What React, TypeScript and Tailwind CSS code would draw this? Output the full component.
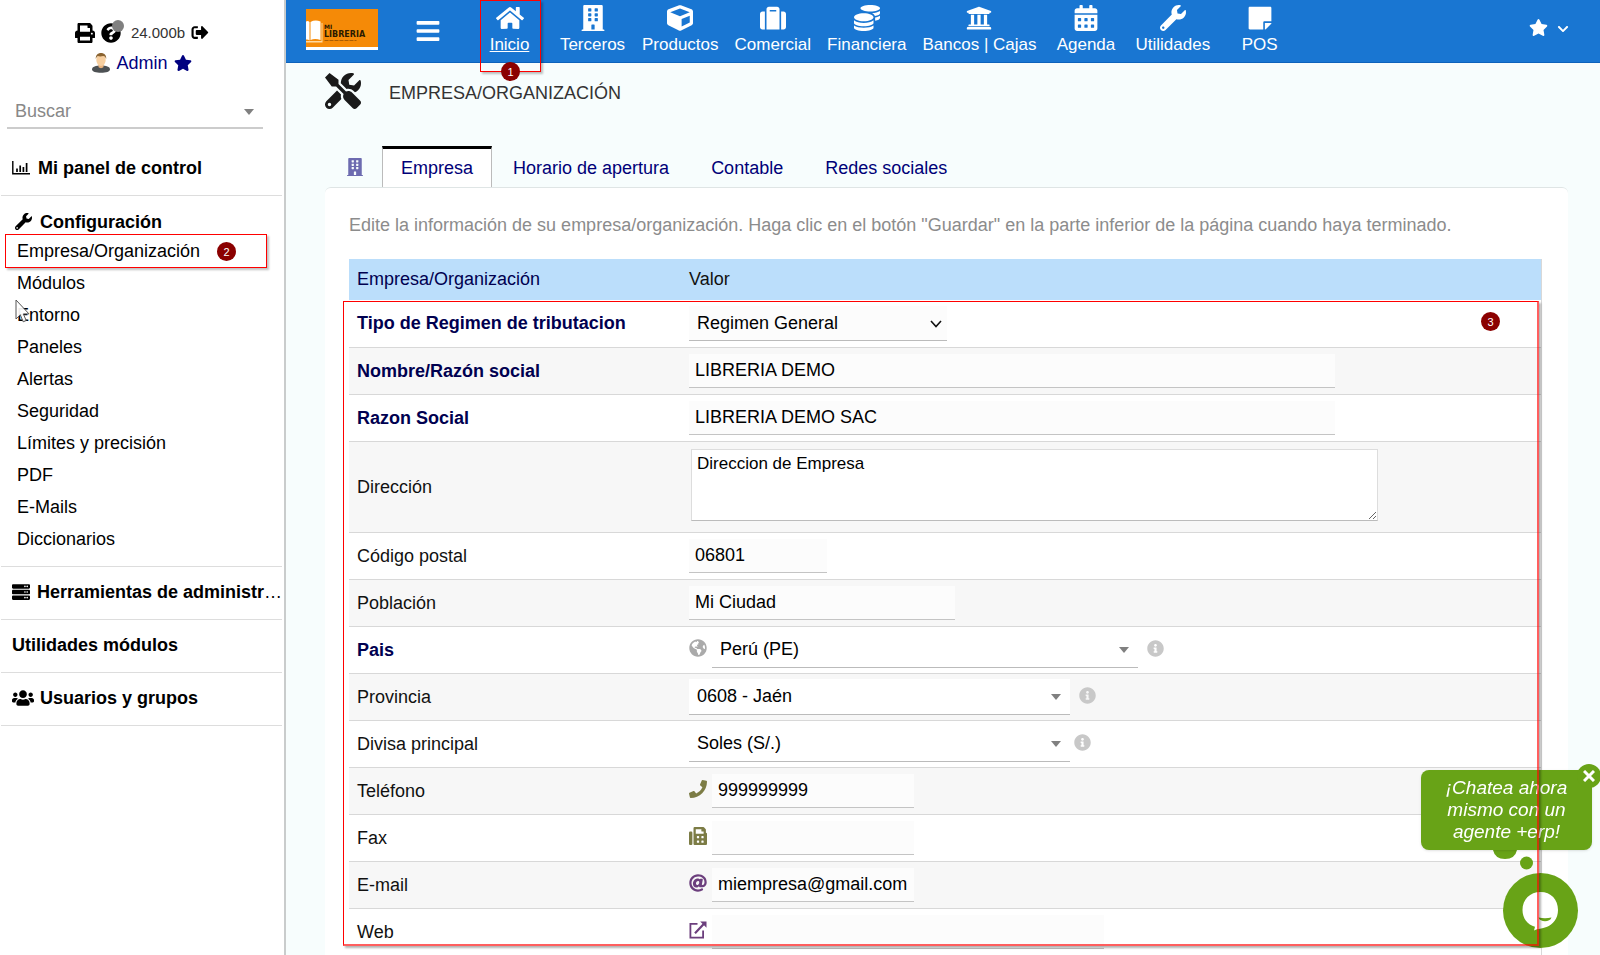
import { ReactNode, useState } from 'react'
import {
  FaAt,
  FaBars,
  FaBuilding,
  FaCalendarAlt,
  FaChevronDown,
  FaCoins,
  FaCube,
  FaFax,
  FaGlobeAmericas,
  FaHome,
  FaInfoCircle,
  FaPhone,
  FaPrint,
  FaQuestionCircle,
  FaServer,
  FaSignOutAlt,
  FaStar,
  FaStickyNote,
  FaSuitcase,
  FaTools,
  FaUniversity,
  FaUsers,
  FaWrench,
} from 'react-icons/fa'

const navItems = [
  { label: 'Inicio', icon: FaHome, active: true },
  { label: 'Terceros', icon: FaBuilding },
  { label: 'Productos', icon: FaCube },
  { label: 'Comercial', icon: FaSuitcase },
  { label: 'Financiera', icon: FaCoins },
  { label: 'Bancos | Cajas', icon: FaUniversity },
  { label: 'Agenda', icon: FaCalendarAlt },
  { label: 'Utilidades', icon: FaWrench },
  { label: 'POS', icon: FaStickyNote },
]

const configItems = [
  'Empresa/Organización',
  'Módulos',
  'Entorno',
  'Paneles',
  'Alertas',
  'Seguridad',
  'Límites y precisión',
  'PDF',
  'E-Mails',
  'Diccionarios',
]

const tabs = ['Empresa', 'Horario de apertura', 'Contable', 'Redes sociales']

const Badge = ({ n, className }: { n: number; className: string }) => (
  <span
    className={`absolute z-40 flex h-[19px] w-[19px] items-center justify-center rounded-full bg-[#8b0000] text-[11px] text-white ${className}`}
  >
    {n}
  </span>
)

const ChartIcon = () => (
  <svg viewBox="0 0 18 14" className="h-3.5 w-[18px]" fill="none" stroke="currentColor">
    <path d="M.8 0v12.8H18" strokeWidth="1.4" />
    <path d="M5 7.500v3.500M8.200 4.500v6.500M11.400 6v5M14.600 2v9" strokeWidth="1.700" />
  </svg>
)

const ExternalIcon = () => (
  <svg viewBox="0 0 18 18" className="h-[18px] w-[18px]" fill="none" stroke="currentColor" strokeWidth="1.8">
    <path d="M8.500 2.900H1.400v13.700h12.700V9.500" />
    <path d="M6 12.200L15 2.800" strokeWidth="2.200" />
    <path d="M11.200.5h6.300v6.300z" fill="currentColor" stroke="none" />
  </svg>
)

const Avatar = () => (
  <svg viewBox="0 0 18 20" className="h-5 w-[18px]">
    <path d="M0 16.500C0 13.500 4 12.500 9 12.500s9 1 9 4c0 2-4 3.300-9 3.300s-9-1.300-9-3.300z" fill="#4d5154" />
    <path d="M6.500 10h5v4c-1 1.500-4 1.500-5 0z" fill="#e9b27c" />
    <ellipse cx="9" cy="7" rx="4.700" ry="6" fill="#f7cfa0" />
    <path d="M3.800 6C3.500 2 6 0 9 0s5.600 2 5.200 6c-.8-2-1.500-3-3-3-2 .5-4 .5-5.300 0-1 .5-1.700 1.500-2.100 3z" fill="#8a6330" />
  </svg>
)

const Logo = () => (
  <a href="#inicio" aria-label="Mi Libreria" className="block h-[41px] w-[72px] bg-white">
    <svg viewBox="0 0 72 41" className="h-[41px] w-[72px]">
      <rect width="72" height="38" fill="#f58a07" />
      <path d="M0 12.500q2-1 3.500.5v18.500Q2 30 0 30.500z" fill="#fff" />
      <path d="M4.500 13Q9 10.500 14.500 12.500V31Q9 29 4.500 31z" fill="#fff" />
      <path d="M0 32h15.500V14h1v19.500H0z" fill="#ffd9a0" />
      <text x="18" y="20" fontSize="6" fontWeight="700" fontFamily="DejaVu Sans, sans-serif" fill="#2b1a00">
        MI
      </text>
      <text x="18" y="28" fontSize="8" fontWeight="700" fontFamily="DejaVu Sans, sans-serif" fill="#2b1a00">
        LIBRERIA
      </text>
      <path d="M18.500 31.500h32" stroke="#a85d05" strokeWidth="1" strokeDasharray="4 1" />
    </svg>
  </a>
)

const Caret = () => (
  <span className="pointer-events-none absolute right-[9px] top-1/2 -mt-[3px] border-x-[5px] border-t-[6px] border-x-transparent border-t-[#808080]" />
)

const ComboBox = ({ id, value, className }: { id: string; value: string; className: string }) => (
  <div className={`relative ${className}`}>
    <select
      id={id}
      className="block h-9 w-full appearance-none border-b border-[#bbb] bg-white pl-2 pr-6 text-black outline-none"
    >
      <option>{value}</option>
    </select>
    <Caret />
  </div>
)

const TextInput = ({ id, value = '', className }: { id: string; value?: string; className: string }) => (
  <input
    id={id}
    type="text"
    defaultValue={value}
    className={`block h-[34px] border-b border-[#c4c4c4] bg-[#fcfcfc] px-1.5 text-black outline-none ${className}`}
  />
)

interface RowProps {
  id: string
  label: string
  required?: boolean
  tall?: boolean
  children: ReactNode
}

const Row = ({ id, label, required, tall, children }: RowProps) => (
  <tr
    className={`border-b border-[#d8d8d8] bg-white last:border-b-0 even:bg-[#f7f7f7] ${tall ? 'h-[91px]' : 'h-[47px]'}`}
  >
    <td className="px-2">
      <label htmlFor={id} className={required ? 'font-bold text-[#000050]' : 'text-[#111]'}>
        {label}
      </label>
    </td>
    <td className="px-2">
      <div className="flex items-center">{children}</div>
    </td>
  </tr>
)

const Info = ({ className }: { className: string }) => (
  <FaInfoCircle className={`h-[17px] w-[17px] text-[#c8c8c8] ${className}`} />
)

const Sidebar = () => (
  <aside className="w-[286px] shrink-0 border-r-2 border-[#c9cccc] bg-white text-black">
    <div className="flex h-[47px] items-end justify-center gap-1.5 pt-[22px]">
      <button aria-label="Imprimir" className="mb-1">
        <FaPrint className="h-5 w-5" />
      </button>
      <button aria-label="Ayuda" className="relative mb-1">
        <FaQuestionCircle className="h-5 w-5" />
        <span className="absolute -right-[3px] -top-[3px] h-3 w-3 rounded-full bg-[#808080]" />
      </button>
      <span className="mb-1 ml-1 text-[15px] leading-5 text-[#333]">24.000b</span>
      <button aria-label="Salir" className="mb-1.5">
        <FaSignOutAlt className="h-[17px] w-[18px]" />
      </button>
    </div>
    <div className="flex h-8 items-center justify-center gap-1.5 text-[#000080]">
      <Avatar />
      <a href="#admin">Admin</a>
      <FaStar className="h-[18px] w-[18px]" />
    </div>

    <div className="relative ml-[7px] mr-[21px] mt-[15px]">
      <select
        aria-label="Buscar"
        className="block h-[35px] w-full appearance-none border-b-2 border-[#ccc] bg-white pl-2 text-[#888] outline-none"
      >
        <option>Buscar</option>
      </select>
      <Caret />
    </div>

    <nav className="mt-[14px] pl-px pr-[2px]">
      <a href="#panel" className="flex h-[53px] items-center gap-2 border-b border-[#ddd] pb-0.5 pl-[11px] font-bold">
        <ChartIcon />
        Mi panel de control
      </a>
      <div className="border-b border-[#ddd] pb-[11px] pt-3">
        <a href="#configuracion" className="flex h-[27px] items-center gap-2 pl-[14px] font-bold">
          <FaWrench className="h-[17px] w-[17px]" />
          Configuración
        </a>
        <ul>
          {configItems.map((item, i) => (
            <li key={item} className="relative">
              {i === 0 && (
                <>
                  <span className="absolute inset-x-1 -inset-y-px mr-[11px] border border-[#f00] shadow-[2px_2px_2px_rgba(0,0,0,0.25)]" />
                  <Badge n={2} className="left-[216px] top-[7px]" />
                </>
              )}
              <a href={`#${item}`} className="block h-8 pl-4 leading-8">
                {item}
              </a>
              {item === 'Entorno' && (
                <svg viewBox="0 0 16 24" className="absolute left-[14px] top-0 h-6 w-4">
                  <path
                    d="M1 1v19l4.300-4.200 2.900 7 3-1.300-2.900-6.600H14z"
                    fill="#fff"
                    fillOpacity=".92"
                    stroke="#555"
                    strokeWidth="1"
                  />
                </svg>
              )}
            </li>
          ))}
        </ul>
      </div>
      <a
        href="#herramientas"
        className="flex h-[53px] items-center gap-[7px] border-b border-[#ddd] pb-0.5 pl-[11px] whitespace-nowrap"
      >
        <FaServer className="h-[18px] w-[18px] shrink-0" />
        <span>
          <b>Herramientas de administr</b>…
        </span>
      </a>
      <a href="#utilidades" className="flex h-[53px] items-center border-b border-[#ddd] pb-0.5 pl-[11px] font-bold">
        Utilidades módulos
      </a>
      <a
        href="#usuarios"
        className="flex h-[53px] items-center gap-1.5 border-b border-[#ddd] pb-0.5 pl-[11px] font-bold"
      >
        <FaUsers className="h-[22px] w-[22px]" />
        Usuarios y grupos
      </a>
    </nav>
  </aside>
)

const TopBar = () => (
  <header className="flex h-[63px] border-b border-[#0d62bb] bg-[#1976d2] text-white">
    <div className="ml-5 mt-[9px]">
      <Logo />
    </div>
    <button aria-label="Menú" className="ml-[38px] flex w-6 items-center justify-center">
      <FaBars className="h-[26px] w-6" />
    </button>
    <nav className="ml-7 flex text-[17px]">
      {navItems.map(({ label, icon: Icon, active }) => (
        <a
          key={label}
          href={`#${label}`}
          className="relative flex min-w-[83px] flex-col items-center px-2 pt-[5px] leading-[22px] whitespace-nowrap"
        >
          <Icon className="mb-[3px] h-[26px] w-7" />
          <span className={active ? 'underline' : ''}>{label}</span>
          {active && (
            <>
              <span className="absolute left-3 right-2.5 top-0 z-30 h-[72px] border border-[#f00] shadow-[2px_2px_2px_rgba(0,0,0,0.25)]" />
              <Badge n={1} className="left-[33px] top-[62px]" />
            </>
          )}
        </a>
      ))}
    </nav>
    <button aria-label="Marcadores" className="ml-auto mr-[31px] flex items-center gap-[9px] pb-[7px]">
      <FaStar className="h-[19px] w-[19px]" />
      <FaChevronDown className="mt-[3px] h-3 w-3" />
    </button>
  </header>
)

const ChatWidget = () => (
  <div className="fixed bottom-[7px] right-0 z-20 w-[180px]">
    <div className="relative ml-px mr-2 rounded-lg bg-[#68a317] px-3 py-[7px] text-center text-[19px] italic leading-[22px] text-white shadow">
      ¡Chatea ahora mismo con un agente&nbsp;+erp!
      <button
        aria-label="Cerrar chat"
        className="absolute -right-[9px] -top-[6px] flex h-6 w-6 items-center justify-center rounded-full bg-[#68a317]"
      >
        <svg viewBox="0 0 12 12" className="h-3 w-3" stroke="#fff" strokeWidth="3">
          <path d="M1 1l10 10M11 1L1 11" />
        </svg>
      </button>
    </div>
    <button aria-label="Abrir chat" className="block">
      <svg viewBox="0 0 180 98" className="h-[98px] w-[180px]">
        <path d="M73 0h24q-2 9-12 9T73 0z" fill="#68a317" />
        <circle cx="106.500" cy="13" r="6.500" fill="#68a317" />
        <circle cx="120.500" cy="60.500" r="37.500" fill="#68a317" />
        <path
          d="M120.500 42c10.500 0 17.500 7.500 17.500 18 0 8.500-5 14.500-11.500 17-4.500 1.700-8.500 1.500-12.500 3.500l1-3.700c-7.500-2-12.500-8.500-12.500-16.800 0-10.500 7.500-18 18-18z"
          fill="#fff"
        />
        <path d="M118.500 67.500q6.500 1.500 13 0c-1.500 5-11.500 5-13 0z" fill="#68a317" />
      </svg>
    </button>
  </div>
)

const CompanyForm = () => (
  <div className="relative mt-[22px]">
    <table className="w-full border-collapse border-r border-[#d8d8d8] text-left">
      <thead>
        <tr className="h-[41px] bg-[#bbdefb]">
          <th className="w-[332px] px-2 pb-px font-normal text-[#000050]">Empresa/Organización</th>
          <th className="px-2 pb-px font-normal text-[#111]">Valor</th>
        </tr>
      </thead>
      <tbody>
        <Row id="regimen" label="Tipo de Regimen de tributacion" required>
          <div className="relative w-[258px]">
            <select
              id="regimen"
              className="block h-[35px] w-full appearance-none border-b border-[#bbb] bg-[#fcfcfc] pl-2 text-black outline-none"
            >
              <option>Regimen General</option>
            </select>
            <svg
              viewBox="0 0 12 8"
              className="pointer-events-none absolute right-[5px] top-[14px] h-2 w-3"
              fill="none"
              stroke="#111"
              strokeWidth="1.600"
            >
              <path d="M1 1l5 5.500L11 1" />
            </svg>
          </div>
        </Row>
        <Row id="nombre" label="Nombre/Razón social" required>
          <TextInput id="nombre" value="LIBRERIA DEMO" className="w-[646px]" />
        </Row>
        <Row id="razon" label="Razon Social" required>
          <TextInput id="razon" value="LIBRERIA DEMO SAC" className="w-[646px]" />
        </Row>
        <Row id="direccion" label="Dirección" tall>
          <textarea
            id="direccion"
            defaultValue="Direccion de Empresa"
            className="mb-1 ml-0.5 block h-[72px] w-[687px] border border-[#ddd] border-b-[#bbb] bg-white px-[5px] py-0.5 text-[17px] leading-6 text-black outline-none"
          />
        </Row>
        <Row id="cp" label="Código postal">
          <TextInput id="cp" value="06801" className="w-[138px]" />
        </Row>
        <Row id="poblacion" label="Población">
          <TextInput id="poblacion" value="Mi Ciudad" className="w-[266px]" />
        </Row>
        <Row id="pais" label="Pais" required>
          <FaGlobeAmericas className="mb-[3px] h-[18px] w-[18px] text-[#aaa]" />
          <ComboBox id="pais" value="Perú (PE)" className="ml-[5px] w-[426px]" />
          <Info className="mb-[3px] ml-[9px]" />
        </Row>
        <Row id="provincia" label="Provincia">
          <ComboBox id="provincia" value="0608 - Jaén" className="w-[381px]" />
          <Info className="mb-[3px] ml-[9px]" />
        </Row>
        <Row id="divisa" label="Divisa principal">
          <ComboBox id="divisa" value="Soles (S/.)" className="w-[381px]" />
          <Info className="mb-[3px] ml-1" />
        </Row>
        <Row id="telefono" label="Teléfono">
          <FaPhone className="mb-[3px] h-[18px] w-[18px] text-[#7c7c45]" />
          <TextInput id="telefono" value="999999999" className="ml-[5px] w-[202px]" />
        </Row>
        <Row id="fax" label="Fax">
          <FaFax className="mb-[3px] h-[18px] w-[18px] text-[#7c7c45]" />
          <TextInput id="fax" className="ml-[5px] w-[202px]" />
        </Row>
        <Row id="email" label="E-mail">
          <FaAt className="mb-[3px] h-[18px] w-[18px] text-[#6c3f7d]" />
          <TextInput id="email" value="miempresa@gmail.com" className="ml-[5px] w-[202px]" />
        </Row>
        <Row id="web" label="Web">
          <span className="mb-[3px] text-[#6c3f7d]">
            <ExternalIcon />
          </span>
          <TextInput id="web" className="ml-[5px] w-[392px]" />
        </Row>
      </tbody>
    </table>
    <span className="pointer-events-none absolute -left-[6px] bottom-[9px] right-[3px] top-[42px] z-30 border border-b-2 border-r-2 border-[#f00] border-b-[#ff0000a0] border-r-[#ff0000a0] shadow-[2px_2px_2px_rgba(0,0,0,0.3)]" />
    <Badge n={3} className="right-[42px] top-[53px]" />
  </div>
)

export default function App() {
  const [tab, setTab] = useState('Empresa')

  return (
    <div className="flex min-h-screen bg-[#f7fdfd] font-['Liberation_Sans',Arial,sans-serif] text-[18px] leading-6">
      <Sidebar />
      <div className="min-w-0 flex-1">
        <TopBar />
        <main className="ml-[39px] mr-8">
          <div className="flex h-[83px] items-start">
            <FaTools className="mt-[10px] h-9 w-9 text-[#1a1a1a]" />
            <h1 className="ml-7 mt-[18px] text-[#333]">EMPRESA/ORGANIZACIÓN</h1>
          </div>

          <div className="flex h-[41px] items-stretch" role="tablist">
            <FaBuilding className="ml-[22px] mr-[19px] mt-3 h-[18px] w-4 text-[#6d6bb0]" />
            {tabs.map((t) => (
              <button
                key={t}
                role="tab"
                aria-selected={t === tab}
                onClick={() => setTab(t)}
                className={
                  t === tab
                    ? 'border-x border-t-[3px] border-x-[#bbb] border-t-black bg-white px-[18px] text-[#000078]'
                    : 'border-t-[3px] border-transparent px-[21px] text-[#000078]'
                }
              >
                {t}
              </button>
            ))}
          </div>

          <section className="rounded-t-md border-t border-[#dfe5e5] bg-white pl-6 pr-[26px] pt-[25px]">
            <p className="text-[#8c8c8c]">
              Edite la información de su empresa/organización. Haga clic en el botón "Guardar" en la parte inferior de
              la página cuando haya terminado.
            </p>
            <CompanyForm />
          </section>
        </main>
      </div>
      <ChatWidget />
    </div>
  )
}
